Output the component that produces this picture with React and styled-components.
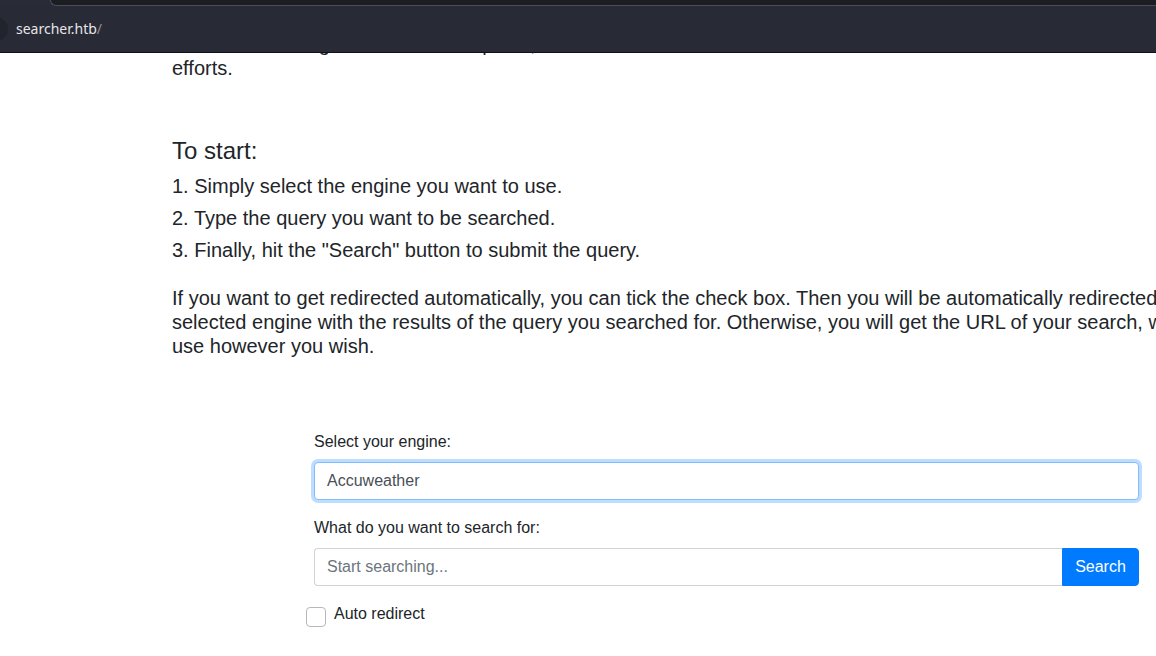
import React from "react";
import styled, { createGlobalStyle } from "styled-components";

const Global = createGlobalStyle`
  html, body { margin: 0; padding: 0; background: #fff; overflow: hidden; }
  body { width: 1156px; height: 656px; }
  * { box-sizing: border-box; }
`;

const Screen = styled.div`
  display: flex;
  flex-direction: column;
  width: 1156px;
  height: 656px;
  overflow: hidden;
`;

const Chrome = styled.header`
  flex: 0 0 53px;
  display: flex;
  flex-direction: column;
  background: #292b36;
  border-bottom: 1px solid #101116;
`;

const TabStrip = styled.div`
  flex: 0 0 6px;
  display: flex;
  background: #292b36;
`;

const TabEdge = styled.div`
  margin-left: 50px;
  flex: 1;
  background: #1c1d23;
  border-left: 1px solid #4a4c56;
  border-bottom: 1px solid #4a4c56;
  border-bottom-left-radius: 8px;
`;

const UrlRow = styled.div`
  flex: 1;
  display: flex;
  align-items: center;
  gap: 8px;
  background: #282a35;
`;

const RoundButton = styled.div`
  width: 24px;
  height: 24px;
  margin-left: -16px;
  border-radius: 50%;
  background: #22242d;
`;

const Url = styled.span`
  font-family: "Noto Sans", "DejaVu Sans", sans-serif;
  font-size: 14px;
  color: #e6e6e9;
  margin-top: -2px;
`;

const UrlSlash = styled.span`
  color: #8f9099;
`;

const Viewport = styled.main`
  flex: 1;
  overflow: hidden;
  font-family: "Liberation Sans", Arial, sans-serif;
  color: #212529;
`;

const Content = styled.div`
  margin-top: -21px;
  padding-left: 172px;
  width: 1400px;
`;

const Para = styled.p`
  margin: ${(p) => p.$mt || 0}px 0 ${(p) => p.$mb || 0}px;
  font-size: 20px;
  line-height: 24px;
  white-space: nowrap;
`;

const Heading = styled.h4`
  margin: 0 0 9px;
  font-size: 24px;
  font-weight: 400;
  line-height: 29px;
`;

const Step = styled.p`
  margin: 0 0 8px;
  font-size: 20px;
  line-height: 24px;
`;

const Form = styled.form`
  margin: 72px 0 0 142px;
  width: 825px;
  display: flex;
  flex-direction: column;
  gap: 16px;
`;

const Group = styled.div`
  display: flex;
  flex-direction: column;
  gap: 8px;
`;

const Label = styled.label`
  font-size: 16px;
  line-height: 24px;
  color: #212529;
`;

const Select = styled.div`
  height: 38px;
  display: flex;
  align-items: center;
  padding: 0 12px;
  border: 1px solid #80bdff;
  border-radius: 4px;
  box-shadow: 0 0 0 3px rgba(0, 123, 255, 0.25);
  font-size: 16px;
  color: #495057;
  background: #fff;
`;

const InputGroup = styled.div`
  display: flex;
  height: 38px;
`;

const TextInput = styled.input`
  flex: 1;
  height: 38px;
  padding: 0 12px;
  border: 1px solid #ced4da;
  border-right: none;
  border-radius: 4px 0 0 4px;
  font-family: "Liberation Sans", Arial, sans-serif;
  font-size: 16px;
  color: #495057;
  outline: none;
  &::placeholder { color: #6c757d; }
`;

const Button = styled.button`
  width: 77px;
  height: 38px;
  border: 1px solid #007bff;
  border-radius: 0 4px 4px 0;
  background: #007bff;
  color: #fff;
  font-family: "Liberation Sans", Arial, sans-serif;
  font-size: 16px;
  padding: 0;
`;

const CheckRow = styled.div`
  display: flex;
  align-items: flex-start;
  gap: 8px;
  margin-left: -8px;
`;

const Box = styled.span`
  width: 20px;
  height: 20px;
  margin-top: 5px;
  border: 1px solid #b7b7b7;
  border-radius: 4px;
  background: #fff;
`;

export default function App() {
  return (
    <>
      <Global />
      <Screen>
        <Chrome>
          <TabStrip>
            <TabEdge />
          </TabStrip>
          <UrlRow>
            <RoundButton />
            <Url>
              searcher.htb<UrlSlash>/</UrlSlash>
            </Url>
          </UrlRow>
        </Chrome>
        <Viewport>
          <Content>
            <Para>
              to all of these engines at the same place, which will make it a lot easier to focus on what matters the most in all of your search
            </Para>
            <Para $mb={56}>efforts.</Para>
            <Heading>To start:</Heading>
            <Step>1. Simply select the engine you want to use.</Step>
            <Step>2. Type the query you want to be searched.</Step>
            <Step>3. Finally, hit the "Search" button to submit the query.</Step>
            <Para $mt={24}>
              If you want to get redirected automatically, you can tick the check box. Then you will be automatically redirected to the
              <br />
              selected engine with the results of the query you searched for. Otherwise, you will get the URL of your search, which you can
              <br />
              use however you wish.
            </Para>
            <Form onSubmit={(e) => e.preventDefault()}>
              <Group>
                <Label>Select your engine:</Label>
                <Select>Accuweather</Select>
              </Group>
              <Group>
                <Label>What do you want to search for:</Label>
                <InputGroup>
                  <TextInput placeholder="Start searching..." />
                  <Button type="button">Search</Button>
                </InputGroup>
              </Group>
              <CheckRow>
                <Box />
                <Label>Auto redirect</Label>
              </CheckRow>
            </Form>
          </Content>
        </Viewport>
      </Screen>
    </>
  );
}
